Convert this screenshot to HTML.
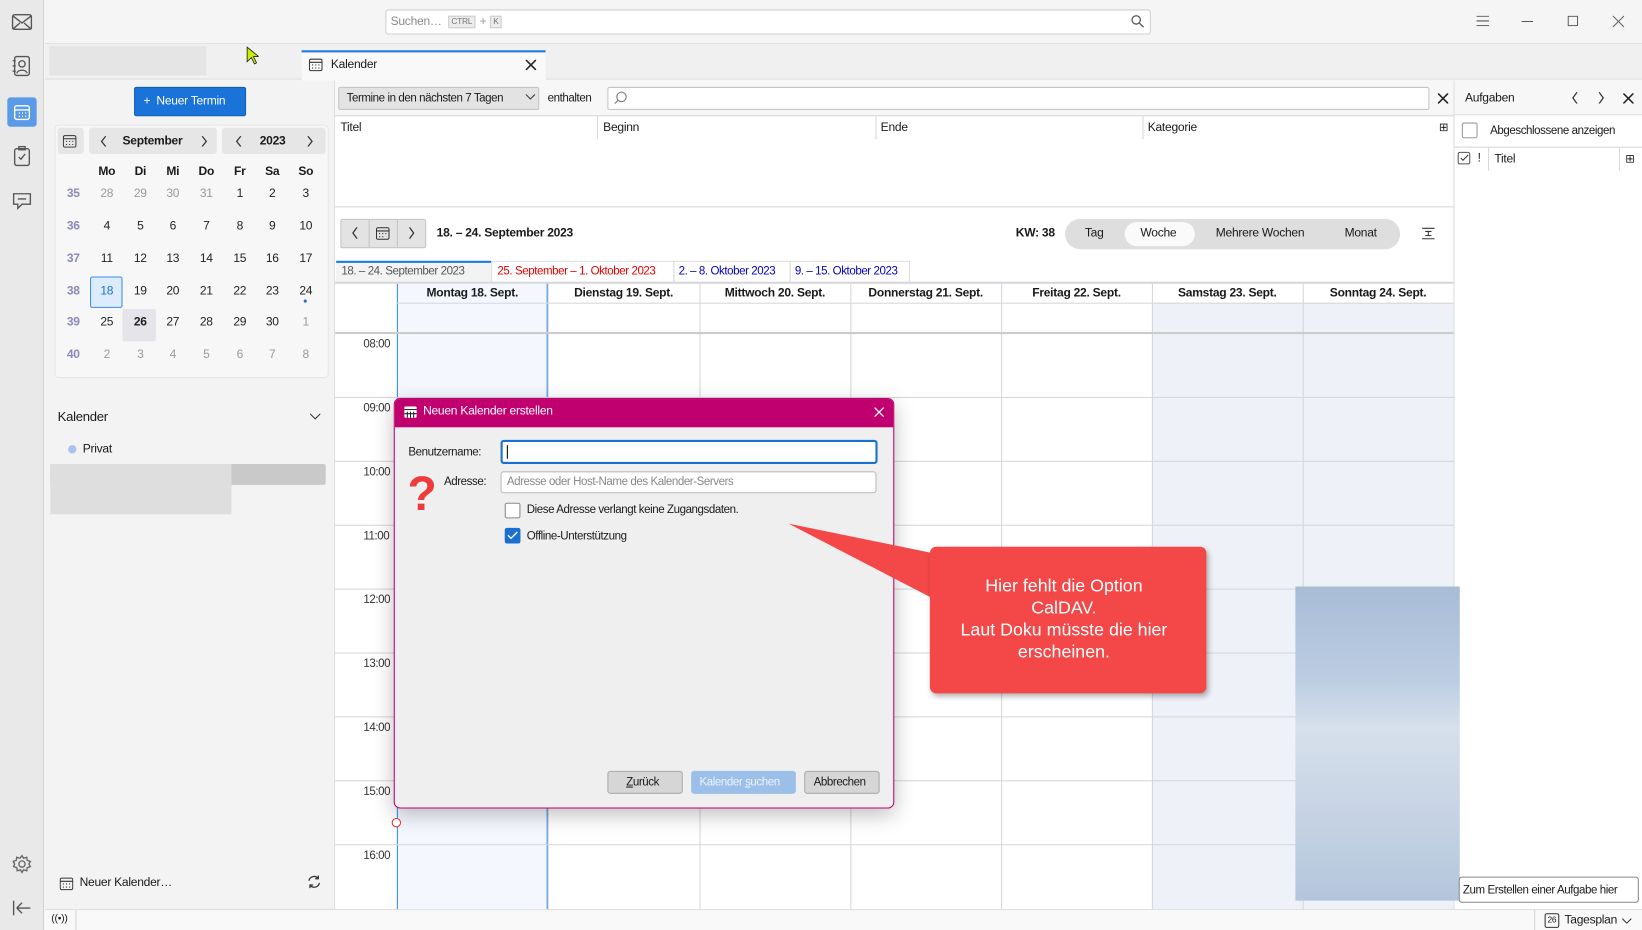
<!DOCTYPE html>
<html><head><meta charset="utf-8">
<style>
*{box-sizing:border-box;margin:0;padding:0}
html,body{width:1642px;height:930px;overflow:hidden;background:#f3f3f3}
#w{position:absolute;left:0;top:0;width:1568px;height:888px;transform:scale(1.04719,1.04730);transform-origin:0 0;font-family:"Liberation Sans",sans-serif;font-size:11.5px;letter-spacing:-0.25px;color:#1a1a1a;background:#f3f3f3}
.a{position:absolute}
.t{position:absolute;white-space:nowrap}
.c{text-align:center}
.n{font-size:11px;letter-spacing:-0.4px}
.hl{position:absolute;height:1px;background:#d6d6dc}
.vl{position:absolute;width:1px;background:#d6d6dc}
svg{position:absolute}
</style></head><body><div id="w">
<!-- left rail -->
<div class="a" style="left:0;top:0;width:42px;height:888px;background:#e9e9e9;border-right:1px solid #d3d3d3"></div>
<svg style="left:11px;top:13px" width="20" height="16" viewBox="0 0 20 16" fill="none" stroke="#555" stroke-width="1.3"><rect x="1" y="1" width="18" height="14" rx="2"/><path d="M1 2l9 7 9-7M1 15l7-6M19 15l-7-6"/></svg>
<svg style="left:12px;top:53px" width="18" height="20" viewBox="0 0 18 20" fill="none" stroke="#555" stroke-width="1.3"><rect x="2" y="1" width="14" height="18" rx="2"/><circle cx="9" cy="8" r="3"/><path d="M4 17c1-4 9-4 10 0M0 5h3M0 10h3M0 15h3"/></svg>
<div class="a" style="left:7px;top:93px;width:28px;height:28px;background:#5a9ae6;border-radius:3px"></div>
<svg style="left:13px;top:99px" width="16" height="16" viewBox="0 0 16 16" fill="none" stroke="#fff" stroke-width="1.3"><rect x="1" y="2" width="14" height="13" rx="2"/><path d="M1 6h14M5 9h1M8 9h1M11 9h1M5 12h1M8 12h1M11 12h1"/></svg>
<svg style="left:13px;top:139px" width="16" height="20" viewBox="0 0 16 20" fill="none" stroke="#555" stroke-width="1.3"><rect x="1" y="3" width="14" height="16" rx="2"/><rect x="5" y="1" width="6" height="3"/><path d="M5 11l2 2 4-5"/></svg>
<svg style="left:11px;top:184px" width="20" height="18" viewBox="0 0 20 18" fill="none" stroke="#555" stroke-width="1.3"><path d="M2 1h16v10H10l-4 4v-4H2z"/><path d="M6 6h8"/></svg>
<svg style="left:12px;top:816px" width="18" height="18" viewBox="0 0 18 18" fill="none" stroke="#666" stroke-width="1.3"><circle cx="9" cy="9" r="3"/><path d="M9 1l1.5 2.5 3-1 .5 3 3 1-1.5 2.5 1.5 2.5-3 1-.5 3-3-1L9 17l-1.5-2.5-3 1-.5-3-3-1L2 9 .5 6.5l3-1 .5-3 3 1z"/></svg>
<svg style="left:12px;top:860px" width="18" height="14" viewBox="0 0 18 14" fill="none" stroke="#555" stroke-width="1.3"><path d="M1 0v14M4 7h13M4 7l5-5M4 7l5 5"/></svg>
<!-- title bar -->
<div class="a" style="left:43px;top:0;width:1525px;height:42px;background:#f5f5f5;border-bottom:1px solid #e2e2e2"></div>
<div class="a" style="left:368px;top:9px;width:731px;height:24px;background:#fff;border:1px solid #cfcfcf;border-radius:3px"></div>
<div class="t" style="left:373px;top:15px;color:#8a8a8a">Suchen…</div>
<div class="t" style="left:428px;top:15px;font-size:8px;color:#777;background:#ececec;border:1px solid #ccc;padding:0 2px;line-height:10px">CTRL</div>
<div class="t" style="left:458px;top:15px;color:#999">+</div>
<div class="t" style="left:468px;top:15px;font-size:8px;color:#777;background:#ececec;border:1px solid #ccc;padding:0 2px;line-height:10px">K</div>
<svg style="left:1080px;top:14px" width="13" height="13" viewBox="0 0 13 13" fill="none" stroke="#555" stroke-width="1.2"><circle cx="5" cy="5" r="4"/><path d="M8 8l4 4"/></svg>
<svg style="left:1410px;top:15px" width="12" height="10" fill="none" stroke="#555"><path d="M0 .5h12M0 5h12M0 9.5h12"/></svg>
<svg style="left:1453px;top:20px" width="11" height="2"><path d="M0 .5h11" stroke="#555"/></svg>
<svg style="left:1497px;top:15px" width="10" height="10"><rect x=".5" y=".5" width="9" height="9" fill="none" stroke="#555"/></svg>
<svg style="left:1540px;top:15px" width="11" height="11" stroke="#666"><path d="M0 0l11 11M11 0L0 11"/></svg>
<!-- tab strip -->
<div class="a" style="left:43px;top:42px;width:1525px;height:34px;background:#f0f0f0;border-bottom:1px solid #e0e0e0"></div>
<div class="a" style="left:47px;top:44px;width:150px;height:28px;background:#e5e5e5"></div>
<svg style="left:235px;top:44px" width="12" height="18"><path d="M1 1v14l4-4 3 6 2-1-3-6h5z" fill="#c7f000" stroke="#222" stroke-width=".8"/></svg>
<div class="a" style="left:288px;top:48px;width:233px;height:29px;background:#f9f9f9;border-top:2px solid #1a7ae0"></div>
<svg style="left:295px;top:55px" width="13" height="13" viewBox="0 0 13 13" fill="none" stroke="#333"><rect x=".5" y="1.5" width="12" height="11" rx="1.5"/><path d="M.5 4.5h12M3 7h1M6 7h1M9 7h1M3 10h1M6 10h1M9 10h1"/></svg>
<div class="t" style="left:316px;top:56px">Kalender</div>
<svg style="left:502px;top:57px" width="10" height="10" stroke="#222" stroke-width="1.5"><path d="M0 0l10 10M10 0L0 10"/></svg>
<!-- left pane -->
<div class="a" style="left:43px;top:77px;width:277px;height:791px;background:#f3f3f3;border-right:1px solid #ddd"></div>
<div class="a" style="left:128px;top:83px;width:107px;height:28px;background:#1a73d8;border:1px solid #0f5fb8;border-radius:2px"></div>
<div class="t" style="left:137px;top:91px;color:#fff">+ &nbsp;Neuer Termin</div>
<div class="a" style="left:52px;top:119px;width:262px;height:242px;background:#f7f7f7;border:1px solid #e6e6e6;border-radius:4px"></div>
<div class="a" style="left:55px;top:122px;width:25px;height:25px;background:#e6e6e6;border-radius:3px"></div>
<svg style="left:60px;top:128px" width="13" height="13" viewBox="0 0 13 13" fill="none" stroke="#333"><rect x=".5" y="1.5" width="12" height="11" rx="1.5"/><path d="M.5 4.5h12M3 7h1M6 7h1M9 7h1M3 10h1M6 10h1M9 10h1"/></svg>
<div class="a" style="left:85px;top:122px;width:122px;height:25px;background:#e6e6e6;border-radius:3px"></div>
<div class="a" style="left:212px;top:122px;width:99px;height:25px;background:#e6e6e6;border-radius:3px"></div>
<svg style="left:96px;top:130px" width="6" height="10" fill="none" stroke="#333" stroke-width="1.2"><path d="M5 0L1 5l4 5"/></svg>
<div class="t" style="left:117px;top:129px;font-weight:bold">September</div>
<svg style="left:192px;top:130px" width="6" height="10" fill="none" stroke="#333" stroke-width="1.2"><path d="M1 0l4 5-4 5"/></svg>
<svg style="left:225px;top:130px" width="6" height="10" fill="none" stroke="#333" stroke-width="1.2"><path d="M5 0L1 5l4 5"/></svg>
<div class="t" style="left:248px;top:129px;font-weight:bold">2023</div>
<svg style="left:293px;top:130px" width="6" height="10" fill="none" stroke="#333" stroke-width="1.2"><path d="M1 0l4 5-4 5"/></svg>
<div class="a" style="left:86px;top:264px;width:31px;height:30px;background:#dcecfc;border:1px solid #3d8ee6;border-radius:2px"></div>
<div class="a" style="left:117px;top:295px;width:32px;height:31px;background:#e4e4ea;border-radius:2px"></div>
<div class="a" style="left:290px;top:286px;width:3px;height:3px;border-radius:2px;background:#1a73d8"></div>
<div id="mc"></div>
<div class="t" style="left:55px;top:391px;font-size:12.5px">Kalender</div>
<svg style="left:296px;top:395px" width="10" height="6" fill="none" stroke="#333"><path d="M0 0l5 5 5-5"/></svg>
<div class="a" style="left:65px;top:425px;width:8px;height:8px;border-radius:4px;background:#a8c4e8"></div>
<div class="t" style="left:79px;top:423px">Privat</div>
<div class="a" style="left:48px;top:443px;width:263px;height:20px;background:#c9c9c9;border-radius:2px"></div>
<div class="a" style="left:48px;top:443px;width:173px;height:48px;background:#dedede"></div>
<svg style="left:57px;top:837px" width="13" height="13" viewBox="0 0 13 13" fill="none" stroke="#333"><rect x=".5" y="1.5" width="12" height="11" rx="1.5"/><path d="M.5 4.5h12M3 7h1M6 7h1M9 7h1M3 10h1M6 10h1M9 10h1"/></svg>
<div class="t" style="left:76px;top:837px">Neuer Kalender…</div>
<svg style="left:293px;top:835px" width="14" height="14" viewBox="0 0 14 14" fill="none" stroke="#333" stroke-width="1.2"><path d="M2 6a5 5 0 0 1 9-2M12 8a5 5 0 0 1-9 2M11 1v3H8M3 13v-3h3"/></svg>
<!-- status bar -->
<div class="a" style="left:43px;top:868px;width:1525px;height:20px;background:#f9f9f9;border-top:1px solid #ddd"></div>
<div class="t" style="left:49px;top:872px;font-size:10px">((•))</div>
<div class="vl" style="left:72px;top:869px;height:19px"></div>
<div class="vl" style="left:1465px;top:869px;height:19px"></div>
<div class="a" style="left:1475px;top:872px;width:14px;height:14px;border:1px solid #333;border-radius:2px;font-size:8px;text-align:center;line-height:12px">26</div>
<div class="t" style="left:1494px;top:873px">Tagesplan</div>
<svg style="left:1549px;top:877px" width="9" height="5" fill="none" stroke="#333"><path d="M0 0l4.5 4.5L9 0"/></svg>
<!-- center -->
<div class="a" style="left:320px;top:77px;width:1068px;height:791px;background:#fff"></div>
<div class="a" style="left:320px;top:77px;width:1068px;height:33px;background:#f7f7f7"></div>
<div class="a" style="left:323px;top:83px;width:192px;height:22px;background:#e3e3e3;border:1px solid #c4c4c4;border-radius:2px"></div>
<div class="t n" style="left:331px;top:88px">Termine in den nächsten 7 Tagen</div>
<svg style="left:502px;top:90px" width="9" height="5" fill="none" stroke="#333"><path d="M0 0l4.5 4.5L9 0"/></svg>
<div class="t n" style="left:523px;top:88px">enthalten</div>
<div class="a" style="left:580px;top:83px;width:785px;height:22px;background:#fff;border:1px solid #c4c4c4;border-radius:2px"></div>
<svg style="left:586px;top:87px" width="13" height="13" fill="none" stroke="#777"><circle cx="7.5" cy="5.5" r="4.5"/><path d="M4.5 8.5L1 12"/></svg>
<svg style="left:1373px;top:89px" width="10" height="10" stroke="#222" stroke-width="1.5"><path d="M0 0l10 10M10 0L0 10"/></svg>
<div class="hl" style="left:320px;top:110px;width:1068px"></div>
<div class="t" style="left:325px;top:116px">Titel</div>
<div class="vl" style="left:570px;top:111px;height:22px"></div>
<div class="t" style="left:576px;top:116px">Beginn</div>
<div class="vl" style="left:836px;top:111px;height:22px"></div>
<div class="t" style="left:841px;top:116px">Ende</div>
<div class="vl" style="left:1091px;top:111px;height:22px"></div>
<div class="t" style="left:1096px;top:116px">Kategorie</div>
<div class="t" style="left:1374px;top:115px;font-size:11px">⊞</div>
<div class="hl" style="left:320px;top:197px;width:1068px"></div>
<!-- nav row -->
<div class="a" style="left:325px;top:209px;width:82px;height:28px;background:#e3e3e3;border:1px solid #c4c4c4;border-radius:2px"></div>
<div class="vl" style="left:352px;top:210px;height:26px;background:#c4c4c4"></div>
<div class="vl" style="left:379px;top:210px;height:26px;background:#c4c4c4"></div>
<svg style="left:336px;top:217px" width="6" height="11" fill="none" stroke="#333" stroke-width="1.2"><path d="M5 0L1 5.5 5 11"/></svg>
<svg style="left:359px;top:216px" width="13" height="13" viewBox="0 0 13 13" fill="none" stroke="#333"><rect x=".5" y="1.5" width="12" height="11" rx="1.5"/><path d="M.5 4.5h12M3 7h1M6 7h1M9 7h1M3 10h1M6 10h1"/></svg>
<svg style="left:390px;top:217px" width="6" height="11" fill="none" stroke="#333" stroke-width="1.2"><path d="M1 0l4 5.5L1 11"/></svg>
<div class="t" style="left:417px;top:217px;font-weight:bold">18. – 24. September 2023</div>
<div class="t" style="left:970px;top:217px;font-weight:bold">KW: 38</div>
<div class="a" style="left:1017px;top:209px;width:320px;height:29px;background:#dedede;border-radius:15px"></div>
<div class="a" style="left:1074px;top:212px;width:67px;height:23px;background:#fafafa;border-radius:12px"></div>
<div class="t" style="left:1036px;top:217px">Tag</div>
<div class="t" style="left:1089px;top:217px">Woche</div>
<div class="t" style="left:1161px;top:217px">Mehrere Wochen</div>
<div class="t" style="left:1284px;top:217px">Monat</div>
<svg style="left:1358px;top:217px" width="12" height="12" fill="none" stroke="#333"><path d="M0 1h12M0 11h12M3 4h6M3 8h6M6 4v4"/></svg>
<!-- week tabs -->
<div class="a" style="left:321px;top:249px;width:148px;height:20px;background:#f3f3f3;border-top:2px solid #1a7ae0"></div>
<div class="t n" style="left:326px;top:253px;color:#555">18. – 24. September 2023</div>
<div class="a" style="left:469px;top:249px;width:400px;height:20px;border:1px solid #ddd;border-bottom:none"></div>
<div class="vl" style="left:643px;top:249px;height:20px"></div>
<div class="vl" style="left:754px;top:249px;height:20px"></div>
<div class="t n" style="left:475px;top:253px;color:#e00">25. September – 1. Oktober 2023</div>
<div class="t n" style="left:648px;top:253px;color:#00c">2. – 8. Oktober 2023</div>
<div class="t n" style="left:759px;top:253px;color:#00c">9. – 15. Oktober 2023</div>
<div class="hl" style="left:320px;top:269px;width:1068px;height:2px"></div>
<div id="grid"></div>
<!-- right panel -->
<div class="a" style="left:1388px;top:77px;width:180px;height:791px;background:#fff;border-left:1px solid #ddd"></div>
<div class="a" style="left:1389px;top:77px;width:179px;height:33px;background:#f7f7f7;border-bottom:1px solid #ddd"></div>
<div class="t" style="left:1399px;top:88px">Aufgaben</div>
<svg style="left:1501px;top:88px" width="6" height="11" fill="none" stroke="#333" stroke-width="1.2"><path d="M5 0L1 5.5 5 11"/></svg>
<svg style="left:1526px;top:88px" width="6" height="11" fill="none" stroke="#333" stroke-width="1.2"><path d="M1 0l4 5.5L1 11"/></svg>
<svg style="left:1550px;top:89px" width="10" height="10" stroke="#222" stroke-width="1.5"><path d="M0 0l10 10M10 0L0 10"/></svg>
<div class="a" style="left:1396px;top:117px;width:15px;height:15px;border:1px solid #999;border-radius:2px;background:#fff"></div>
<div class="t n" style="left:1423px;top:119px">Abgeschlossene anzeigen</div>
<div class="hl" style="left:1389px;top:140px;width:179px"></div>
<div class="a" style="left:1392px;top:145px;width:12px;height:12px;border:1px solid #555;border-radius:2px"></div>
<svg style="left:1394px;top:147px" width="9" height="8" fill="none" stroke="#333"><path d="M1 4l2 2 5-5"/></svg>
<div class="t" style="left:1411px;top:145px">!</div>
<div class="vl" style="left:1421px;top:141px;height:22px"></div>
<div class="t" style="left:1427px;top:146px">Titel</div>
<div class="vl" style="left:1546px;top:141px;height:22px"></div>
<div class="t" style="left:1552px;top:145px;font-size:11px">⊞</div>
<!-- blurred box -->
<div class="a" style="left:1237px;top:560px;width:157px;height:300px;background:linear-gradient(180deg,#a8bcd6 0%,#bccde2 30%,#d6e0ec 45%,#c8d4e4 70%,#b4c6dc 100%)"></div>
<div class="a" style="left:1393px;top:837px;width:172px;height:25px;background:#fff;border:1px solid #888;border-radius:3px"></div>
<div class="t n" style="left:1397px;top:844px">Zum Erstellen einer Aufgabe hier</div>
<!-- dialog -->
<div class="a" style="left:376px;top:380px;width:478px;height:392px;background:#efefef;border:1px solid #c0006f;border-radius:6px;box-shadow:0 6px 20px rgba(0,0,0,.25);overflow:hidden">
 <div class="a" style="left:0;top:0;width:478px;height:27px;background:#c0006f"></div>
</div>
<svg style="left:386px;top:388px" width="12" height="11" viewBox="0 0 12 11"><rect width="12" height="11" rx="1.5" fill="#fff"/><path d="M0 3h12M3 5v6M6 5v6M9 5v6M0 7h12" stroke="#222"/></svg>
<div class="t" style="left:404px;top:387px;color:#fff">Neuen Kalender erstellen</div>
<svg style="left:835px;top:389px" width="9" height="9" stroke="#fff" stroke-width="1.2"><path d="M0 0l9 9M9 0L0 9"/></svg>
<div class="t n" style="left:390px;top:426px">Benutzername:</div>
<div class="a" style="left:478px;top:420px;width:360px;height:23px;background:#fff;border:2px solid #1a6fd0;border-radius:3px"></div>
<div class="a" style="left:484px;top:425px;width:1px;height:13px;background:#000"></div>
<div class="t n" style="left:424px;top:454px">Adresse:</div>
<div class="a" style="left:478px;top:450px;width:359px;height:21px;background:#fff;border:1px solid #bbb;border-radius:3px"></div>
<div class="t n" style="left:484px;top:454px;color:#888">Adresse oder Host-Name des Kalender-Servers</div>
<div class="t" style="left:389px;top:444px;font-size:46px;color:#ee3b3b;font-weight:bold;text-shadow:0 0 3px #fff">?</div>
<div class="a" style="left:482px;top:480px;width:15px;height:15px;background:#fff;border:1px solid #888;border-radius:2px"></div>
<div class="t n" style="left:503px;top:481px">Diese Adresse verlangt keine Zugangsdaten.</div>
<div class="a" style="left:482px;top:504px;width:15px;height:15px;background:#1a6fd0;border-radius:2px"></div>
<svg style="left:484px;top:507px" width="11" height="9" fill="none" stroke="#fff" stroke-width="1.3"><path d="M1 4l3 3 6-6"/></svg>
<div class="t n" style="left:503px;top:506px">Offline-Unterstützung</div>
<div class="a" style="left:580px;top:736px;width:72px;height:22px;background:#d6d6d6;border:1px solid #aaa;border-radius:3px"></div>
<div class="t n" style="left:598px;top:741px"><u>Z</u>urück</div>
<div class="a" style="left:660px;top:736px;width:100px;height:22px;background:#9bbfe8;border-radius:3px"></div>
<div class="t n" style="left:668px;top:741px;color:#eef4fc">Kalender <u>s</u>uchen</div>
<div class="a" style="left:768px;top:736px;width:72px;height:22px;background:#d6d6d6;border:1px solid #aaa;border-radius:3px"></div>
<div class="t n" style="left:777px;top:741px">Abbrechen</div>
<div class="a" style="left:374px;top:781px;width:9px;height:9px;border:1.5px solid #d33;border-radius:50%;background:#fff"></div>
<!-- callout -->
<svg style="left:750px;top:495px" width="160" height="90"><path d="M3 5L140 33L140 76Z" fill="#f44848"/></svg>
<div class="a" style="left:888px;top:522px;width:264px;height:140px;background:#f44848;border-radius:6px;box-shadow:2px 3px 5px rgba(0,0,0,.3)"></div>
<div class="a c" style="left:888px;top:549px;width:256px;color:#fff;font-size:17px;letter-spacing:0;line-height:21px">Hier fehlt die Option<br>CalDAV.<br>Laut Doku müsste die hier<br>erscheinen.</div>
</div>
<script>
var g='';var cols=[379,523,668,812,956,1100,1244,1388];
var days=['Montag 18. Sept.','Dienstag 19. Sept.','Mittwoch 20. Sept.','Donnerstag 21. Sept.','Freitag 22. Sept.','Samstag 23. Sept.','Sonntag 24. Sept.'];
g+='<div class="a" style="left:1100px;top:289px;width:288px;height:579px;background:#eef1f8"></div>';
g+='<div class="a" style="left:379px;top:271px;width:144px;height:597px;background:#f4f8fe"></div>';
for(var i=0;i<7;i++){g+='<div class="t c" style="left:'+cols[i]+'px;top:274px;width:'+(cols[i+1]-cols[i])+'px;font-weight:bold">'+days[i]+'</div>';}
for(var i=0;i<8;i++){g+='<div class="vl" style="left:'+cols[i]+'px;top:271px;height:597px"></div>';}
g+='<div class="a" style="left:379px;top:271px;width:1px;height:597px;background:#3d8ee6"></div><div class="a" style="left:522px;top:271px;width:1px;height:597px;background:#3d8ee6"></div>';
g+='<div class="hl" style="left:379px;top:289px;width:1009px"></div>';
g+='<div class="hl" style="left:320px;top:317px;width:1068px;height:2px;background:#ccc"></div>';
var h=['08:00','09:00','10:00','11:00','12:00','13:00','14:00','15:00','16:00'];
for(var k=0;k<9;k++){var y=318+61*k;if(k>0)g+='<div class="hl" style="left:320px;top:'+y+'px;width:1068px"></div>';g+='<div class="t n" style="left:347px;top:'+(y+5)+'px;color:#333">'+h[k]+'</div>';}
document.getElementById('grid').outerHTML=g;
var m='';var cx=[70,102,134,165,197,229,260,292];var hd=['','Mo','Di','Mi','Do','Fr','Sa','So'];
for(var i=1;i<8;i++)m+='<div class="t c" style="left:'+(cx[i]-15)+'px;top:158px;width:30px;font-weight:bold">'+hd[i]+'</div>';
var rows=[[35,28,29,30,31,1,2,3],[36,4,5,6,7,8,9,10],[37,11,12,13,14,15,16,17],[38,18,19,20,21,22,23,24],[39,25,26,27,28,29,30,1],[40,2,3,4,5,6,7,8]];
var ry=[185,216,247,278,308,339];
for(var r=0;r<6;r++)for(var c=0;c<8;c++){var col='#222',fw='normal';if(c==0){col='#8a8ab8';fw='bold'}else if((r==0&&c<5)||(r==4&&c==7)||r==5)col='#999';if(r==3&&c==1)col='#1a6fd0';if(r==4&&c==2)fw='bold';
m+='<div class="t c" style="left:'+(cx[c]-15)+'px;top:'+(ry[r]-6)+'px;width:30px;color:'+col+';font-weight:'+fw+'">'+rows[r][c]+'</div>';}
document.getElementById('mc').outerHTML=m;
</script>
</body></html>
